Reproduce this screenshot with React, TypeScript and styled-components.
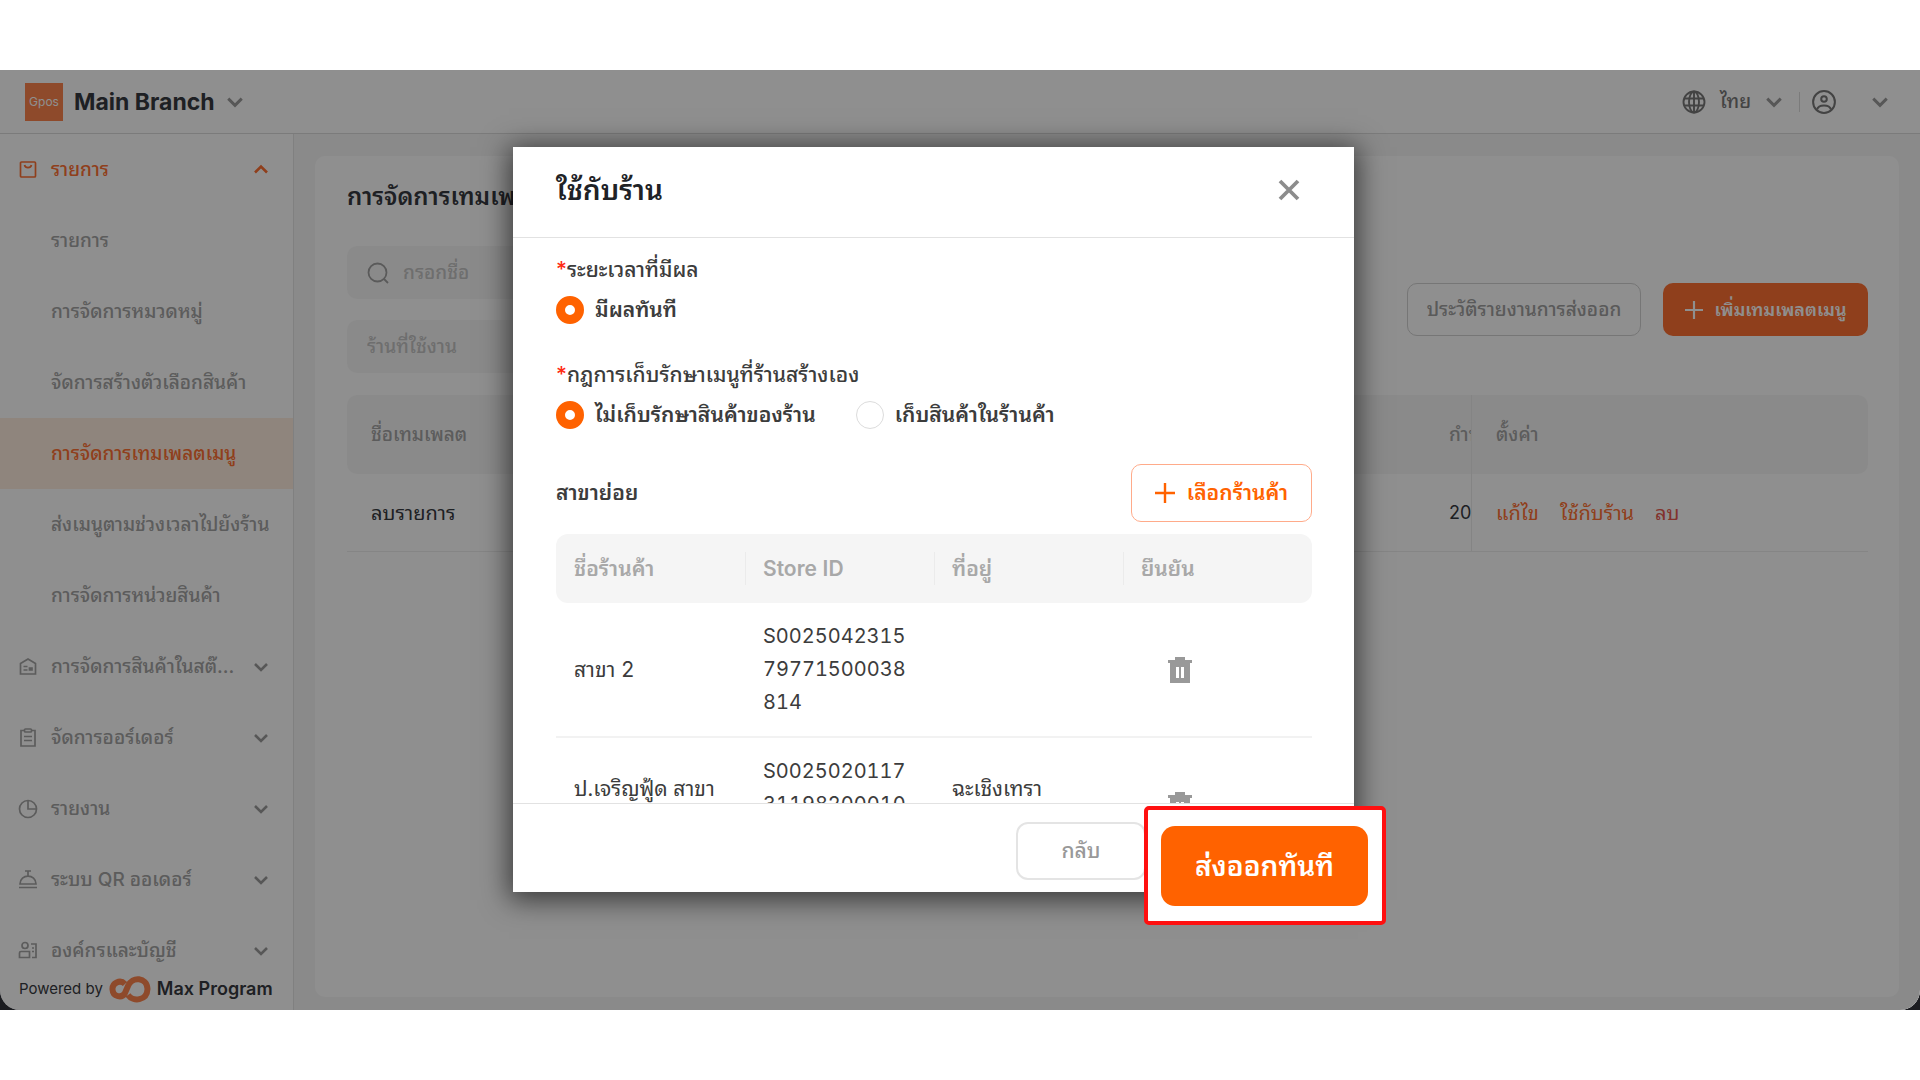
import React from "react";
import styled, { createGlobalStyle, css } from "styled-components";

const Global = createGlobalStyle`
  * { box-sizing: border-box; }
  body { margin: 0; background: #fff; }
  body, button, input, select {
    font-family: Inter, "Noto Sans Thai Looped", "Noto Sans", sans-serif;
    line-height: 24px;
  }
  button { cursor: pointer; }
`;

const Page = styled.div`
  min-height: 100vh;
  display: flex;
  flex-direction: column;
  padding: 70px 0;
`;

const Desktop = styled.div`
  flex: 1;
  display: flex;
  background: #1b1c20;
`;

const Window = styled.div`
  position: relative;
  flex: 1;
  height: calc(100vh - 140px);
  min-height: 900px;
  display: flex;
  flex-direction: column;
  overflow: hidden;
  background: #fff;
  border-radius: 0 0 20px 20px;
`;

const Header = styled.header`
  height: 64px;
  flex: none;
  display: flex;
  align-items: center;
  justify-content: space-between;
  padding: 0 31px 0 25px;
  border-bottom: 1px solid #dcdcdc;
  color: #373940;
`;

const Brand = styled.button`
  display: flex;
  align-items: center;
  gap: 11px;
  padding: 0;
  border: 0;
  background: none;
  color: #373940;
  font-size: 23px;
  font-weight: 700;
`;

const BrandBadge = styled.span`
  width: 38px;
  height: 38px;
  display: grid;
  place-items: center;
  background: #fe844d;
  color: #fff;
  font-size: 12px;
  font-weight: 400;
`;

const HeaderTools = styled.div`
  display: flex;
  align-items: center;
`;

const ToolButton = styled.button<{ $gap: number }>`
  display: flex;
  align-items: center;
  gap: ${(p) => p.$gap}px;
  padding: 0;
  border: 0;
  background: none;
  color: #787878;
  font-size: 19px;
  font-weight: 500;
`;

const ToolDivider = styled.span`
  width: 1px;
  height: 20px;
  margin: 0 12px 0 16px;
  background: #dcdcdc;
`;

const Main = styled.div`
  flex: 1;
  min-height: 0;
  display: flex;
`;

const Sidebar = styled.aside`
  width: 294px;
  flex: none;
  display: flex;
  flex-direction: column;
  border-right: 1px solid #e4e4e4;
`;

const Nav = styled.nav`
  flex: 1;
  min-height: 0;
  overflow: hidden;
`;

const NavItem = styled.a<{ $active?: boolean; $open?: boolean }>`
  height: 71px;
  display: grid;
  grid-template-columns: 20px 1fr 16px;
  align-items: center;
  column-gap: 13px;
  padding: 0 24px 0 18px;
  color: ${(p) => (p.$active || p.$open ? "#ff7032" : "#a4a4a4")};
  background: ${(p) => (p.$active ? "#ffeedf" : "none")};
  font-size: 19px;
  font-weight: 500;
  text-decoration: none;
  white-space: nowrap;
`;

const SideFooter = styled.div`
  height: 43px;
  flex: none;
  display: flex;
  align-items: center;
  gap: 6px;
  padding-left: 19px;
  color: #373940;
  font-size: 15px;

  b { font-size: 18px; font-weight: 600; }
`;

const Content = styled.main`
  flex: 1;
  min-width: 0;
  display: flex;
  padding: 22px 21px 13px;
  background: #f7f7f7;
`;

const Card = styled.section`
  flex: 1;
  min-width: 0;
  padding: 25px 31px 24px 32px;
  border-radius: 10px;
  background: #fff;
`;

const CardTitle = styled.h1`
  margin: 0;
  color: #373940;
  font-size: 24px;
  line-height: 32px;
  font-weight: 600;
`;

const FilterRow = styled.div`
  display: flex;
  align-items: center;
  justify-content: space-between;
  margin: 33px 0 22px;
`;

const Fields = styled.div`
  display: grid;
  gap: 21px;
  width: 320px;
`;

const Field = styled.label`
  height: 53px;
  display: flex;
  align-items: center;
  gap: 14px;
  padding: 0 20px;
  border-radius: 10px;
  background: #f7f7f7;
  color: #a0a0a0;

  input {
    flex: 1;
    min-width: 0;
    height: 40px;
    border: 0;
    outline: 0;
    padding: 0;
    background: none;
    font-size: 19px;
    line-height: 40px;
    font-weight: 500;
  }
  input::placeholder { color: #c4c4c4; opacity: 1; }
`;

const Actions = styled.div`
  display: flex;
  gap: 22px;
`;

const buttonBase = css`
  display: flex;
  align-items: center;
  justify-content: center;
  gap: 12px;
  padding: 0;
  border-radius: 10px;
  font-size: 19px;
  white-space: nowrap;
`;

const GhostButton = styled.button`
  ${buttonBase}
  width: 234px;
  height: 53px;
  border: 1px solid #d2d2d2;
  background: #fff;
  color: #a0a0a0;
  font-weight: 500;
`;

const AddButton = styled.button`
  ${buttonBase}
  width: 205px;
  height: 53px;
  border: 0;
  background: #ff7032;
  color: #fff;
  font-size: 18px;
  font-weight: 600;
`;

const TemplateTable = styled.table`
  width: 100%;
  table-layout: fixed;
  border-collapse: separate;
  border-spacing: 0;
  font-size: 20px;
  text-align: left;

  th, td { padding: 0; white-space: nowrap; overflow: hidden; }
  th { height: 79px; background: #f7f7f7; color: #a4a4a4; font-size: 19px; font-weight: 500; }
  td { height: 78px; border-bottom: 1px solid #eee; color: #373940; }
  td:nth-child(2) { font-size: 18px; }
  th:first-child, td:first-child { padding-left: 24px; }
  th:first-child { border-radius: 10px 0 0 10px; }
  th:last-child { border-radius: 0 10px 10px 0; }
  th:last-child, td:last-child { padding-left: 24px; border-left: 1px solid #ececec; }
`;

const RowLinks = styled.div`
  display: flex;
  gap: 21px;
`;

const RowLink = styled.a<{ $danger?: boolean }>`
  color: ${(p) => (p.$danger ? "#e85a50" : "#ff7032")};
  font-weight: 400;
  text-decoration: none;
`;

const Overlay = styled.div`
  position: absolute;
  inset: 0;
  display: flex;
  align-items: flex-start;
  justify-content: center;
  padding: 77px 53px 0 0;
  background: rgba(0, 0, 0, 0.44);
`;

const Dialog = styled.div`
  position: relative;
  width: 841px;
  height: 745px;
  display: flex;
  flex-direction: column;
  background: #fff;
  color: #3c3c3c;
  box-shadow: 0 4px 26px 4px rgba(0, 0, 0, 0.6);
`;

const DialogHead = styled.div`
  height: 91px;
  flex: none;
  display: flex;
  align-items: center;
  justify-content: space-between;
  padding: 0 51px 4px 43px;
  border-bottom: 1px solid #e2e2e2;

  h2 { margin: 0; color: #202226; font-size: 28px; line-height: 36px; font-weight: 600; }
`;

const IconButton = styled.button`
  display: grid;
  place-items: center;
  padding: 0;
  border: 0;
  background: none;
  color: #8c8c8c;
`;

const DialogBody = styled.div`
  flex: 1;
  min-height: 0;
  overflow: hidden;
  padding: 16px 42px 0 43px;
`;

const Choices = styled.fieldset`
  margin: 0 0 35px;
  padding: 0;
  border: 0;
`;

const ChoicesTitle = styled.legend`
  padding: 0;
  font-size: 21px;
  line-height: 32px;
  font-weight: 500;

  span { color: #ff2a12; }
`;

const ChoiceRow = styled.div`
  display: flex;
  gap: 40px;
  padding-top: 10px;
`;

const Choice = styled.label`
  height: 28px;
  display: flex;
  align-items: center;
  gap: 11px;
  font-size: 21px;
  font-weight: 600;

  input {
    appearance: none;
    width: 28px;
    height: 28px;
    margin: 0;
    border: 1px solid #dcdcdc;
    border-radius: 50%;
    background: #fff;
  }
  input:checked { border: 9px solid #ff6200; }
`;

const BranchBar = styled.div`
  display: flex;
  align-items: center;
  justify-content: space-between;
  margin-bottom: 12px;
  font-size: 21px;
  font-weight: 600;
`;

const PickButton = styled.button`
  ${buttonBase}
  width: 181px;
  height: 58px;
  border: 1px solid #ffab8a;
  background: #fff;
  color: #ff6200;
  font-size: 21px;
  font-weight: 600;
`;

const StoreTable = styled.table`
  width: 100%;
  table-layout: fixed;
  border-collapse: separate;
  border-spacing: 0;
  font-size: 21px;
  line-height: 33px;
  text-align: left;
  font-variant-numeric: tabular-nums;

  th { padding: 18px 0; background: #f5f5f5; color: #a8a8a8; font-weight: 600; }
  th span { display: block; padding-left: 18px; }
  th + th span { padding-left: 17px; border-left: 1px solid #ebebeb; }
  th:first-child { border-radius: 12px 0 0 12px; }
  th:last-child { border-radius: 0 12px 12px 0; }
  td { padding: 17px 18px; border-bottom: 2px solid #f2f2f2; white-space: pre; }
  td:nth-child(2) { font-size: 20px; }
`;

const TrashCell = styled.div`
  display: flex;
  padding-left: 26px;
`;

const DialogFoot = styled.div`
  height: 89px;
  flex: none;
  display: flex;
  justify-content: flex-end;
  padding: 18px 208px 0 0;
  border-top: 1px solid #e2e2e2;
`;

const BackButton = styled.button`
  ${buttonBase}
  width: 130px;
  height: 58px;
  border: 2px solid #e4e4e4;
  border-radius: 12px;
  background: #fff;
  color: #999;
  font-size: 21px;
  font-weight: 500;
`;

const Callout = styled.div`
  position: absolute;
  right: -32px;
  bottom: -33px;
  padding: 16px 14px 15px 13px;
  border: 4px solid #ff1010;
  border-radius: 5px;
  background: #fff;
`;

const ExportButton = styled.button`
  ${buttonBase}
  width: 207px;
  height: 80px;
  border: 0;
  border-radius: 14px;
  background: #ff6200;
  color: #fff;
  font-size: 28px;
  font-weight: 600;
`;

const ChevronIcon = styled.svg`
  color: #9c9c9c;
`;

const Chevron = ({ up, size = 16 }: { up?: boolean; size?: number }) => {
  const Shape = up ? "svg" : ChevronIcon;
  return (
    <Shape width={size} height={size} viewBox="0 0 16 16" fill="none" stroke="currentColor" strokeWidth="2.6">
      <path d={up ? "M2 10.500 8 4.500 14 10.500" : "M2 5 8 11 14 5"} />
    </Shape>
  );
};

const Plus = ({ size }: { size: number }) => (
  <svg width={size} height={size} viewBox="0 0 20 20" fill="none" stroke="currentColor" strokeWidth="2.4">
    <path d="M10 0V20M0 10H20" />
  </svg>
);

const Trash = () => (
  <svg width="26" height="28" viewBox="0 0 26 28" fill="#999">
    <path fillRule="evenodd" d="M8 1H18V4H25V7H23V27H3V7H1V4H8ZM9 11V22H12V11ZM14 11V22H17V11Z" />
  </svg>
);

const icons: Record<string, React.ReactNode> = {
  bag: <><rect x="2.500" y="2" width="15" height="15" rx="1" /><path d="M6.500 5C7.500 8.500 12.500 8.500 13.500 5" /></>,
  store: <><path d="M2.500 17V6.500L10 2 17.500 6.500V17Z" /><path d="M5.500 9.500H9.500M5.500 13H9.500" /><path d="M11.500 11H14V13H11.500Z" fill="currentColor" /></>,
  order: <><path d="M6.500 2.500H3V18H17V2.500H13.500" /><rect x="6.500" y="1" width="7" height="3" rx="1" /><path d="M6 8.500H14M6 12.500H14" /></>,
  report: <><circle cx="10" cy="10" r="8.500" /><path d="M10 1.500V10H18.500" /></>,
  bell: <><path d="M2 14C2 3.500 18 3.500 18 14Z M1 17.500H19 M10 6V1.500 M7 1H13" /></>,
  org: <><circle cx="7" cy="4.500" r="3" /><path d="M1.500 16.500V12Q1.500 10.500 3 10.500H11.500V16.500Z M13 3H18V16.500H14 M14 7H16M14 10.500H16" /></>,
};

const NavIcon = ({ name }: { name: string }) => (
  <svg width="20" height="20" viewBox="0 0 20 20" fill="none" stroke="currentColor" strokeWidth="1.7">
    {icons[name]}
  </svg>
);

const navItems: { label: string; icon?: string; open?: boolean; active?: boolean }[] = [
  { label: "รายการ", icon: "bag", open: true },
  { label: "รายการ" },
  { label: "การจัดการหมวดหมู่" },
  { label: "จัดการสร้างตัวเลือกสินค้า" },
  { label: "การจัดการเทมเพลตเมนู", active: true },
  { label: "ส่งเมนูตามช่วงเวลาไปยังร้าน" },
  { label: "การจัดการหน่วยสินค้า" },
  { label: "การจัดการสินค้าในสต๊...", icon: "store" },
  { label: "จัดการออร์เดอร์", icon: "order" },
  { label: "รายงาน", icon: "report" },
  { label: "ระบบ QR ออเดอร์", icon: "bell" },
  { label: "องค์กรและบัญชี", icon: "org" },
];

const stores = [
  { name: "สาขา 2", id: "S0025042315\n79771500038\n814", address: "" },
  { name: "ป.เจริญฟู้ด สาขา\n\u00a0", id: "S0025020117\n31198200010\n\u00a0", address: "ฉะเชิงเทรา\n\u00a0" },
];

export default function App() {
  return (
    <Page>
      <Global />
      <Desktop>
        <Window>
          <Header>
            <Brand>
              <BrandBadge>Gpos</BrandBadge>
              Main Branch
              <Chevron size={18} />
            </Brand>
            <HeaderTools>
              <ToolButton $gap={14}>
                <svg width="24" height="24" viewBox="0 0 24 24" fill="none" stroke="currentColor" strokeWidth="1.9">
                  <circle cx="12" cy="12" r="10.500" />
                  <ellipse cx="12" cy="12" rx="5" ry="10.500" />
                  <path d="M12 2V22M3 8.500H21M3 15.500H21" />
                </svg>
                ไทย
                <Chevron size={18} />
              </ToolButton>
              <ToolDivider />
              <ToolButton $gap={35} aria-label="บัญชี">
                <svg width="24" height="24" viewBox="0 0 24 24" fill="none" stroke="currentColor" strokeWidth="2">
                  <circle cx="12" cy="12" r="10.900" />
                  <circle cx="12" cy="9" r="2.800" />
                  <path d="M5 19.500C6.500 14 17.500 14 19 19.500" />
                </svg>
                <Chevron size={18} />
              </ToolButton>
            </HeaderTools>
          </Header>
          <Main>
            <Sidebar>
              <Nav>
                {navItems.map((item, i) => (
                  <NavItem key={i} href="#" $active={item.active} $open={item.open}>
                    {item.icon ? <NavIcon name={item.icon} /> : <span />}
                    <span>{item.label}</span>
                    {item.icon && <Chevron up={item.open} />}
                  </NavItem>
                ))}
              </Nav>
              <SideFooter>
                Powered by
                <svg width="42" height="28" viewBox="0 0 42 28" fill="none" stroke="#fe844d" strokeWidth="6">
                  <path d="M16 9C11 4 3 8 3.500 14.500C4 22 13 23.500 16 18L19 11C23 1 38 2 38.500 14C38 26 24 27 19 20" />
                </svg>
                <b>Max Program</b>
              </SideFooter>
            </Sidebar>
            <Content>
              <Card>
                <CardTitle>การจัดการเทมเพลตเมนู</CardTitle>
                <FilterRow>
                  <Fields>
                    <Field>
                      <svg width="22" height="22" viewBox="0 0 22 22" fill="none" stroke="currentColor" strokeWidth="1.8">
                        <circle cx="10.500" cy="10.500" r="9" />
                        <path d="M17 17 21 21" />
                      </svg>
                      <input placeholder="กรอกชื่อ" />
                    </Field>
                    <Field>
                      <input placeholder="ร้านที่ใช้งาน" />
                    </Field>
                  </Fields>
                  <Actions>
                    <GhostButton>ประวัติรายงานการส่งออก</GhostButton>
                    <AddButton>
                      <Plus size={18} />
                      เพิ่มเทมเพลตเมนู
                    </AddButton>
                  </Actions>
                </FilterRow>
                <TemplateTable>
                  <colgroup>
                    <col />
                    <col width="22" />
                    <col width="397" />
                  </colgroup>
                  <thead>
                    <tr>
                      <th>ชื่อเทมเพลต</th>
                      <th>กำห</th>
                      <th>ตั้งค่า</th>
                    </tr>
                  </thead>
                  <tbody>
                    <tr>
                      <td>ลบรายการ</td>
                      <td>20</td>
                      <td>
                        <RowLinks>
                          <RowLink href="#">แก้ไข</RowLink>
                          <RowLink href="#">ใช้กับร้าน</RowLink>
                          <RowLink href="#" $danger>ลบ</RowLink>
                        </RowLinks>
                      </td>
                    </tr>
                  </tbody>
                </TemplateTable>
              </Card>
            </Content>
          </Main>
          <Overlay>
            <Dialog role="dialog" aria-labelledby="dialog-title">
              <DialogHead>
                <h2 id="dialog-title">ใช้กับร้าน</h2>
                <IconButton aria-label="ปิด">
                  <svg width="28" height="28" viewBox="0 0 28 28" fill="none" stroke="currentColor" strokeWidth="3.800">
                    <path d="M5 5 23 23M23 5 5 23" />
                  </svg>
                </IconButton>
              </DialogHead>
              <DialogBody>
                <Choices>
                  <ChoicesTitle><span>*</span>ระยะเวลาที่มีผล</ChoicesTitle>
                  <ChoiceRow>
                    <Choice><input type="radio" name="period" defaultChecked />มีผลทันที</Choice>
                  </ChoiceRow>
                </Choices>
                <Choices>
                  <ChoicesTitle><span>*</span>กฎการเก็บรักษาเมนูที่ร้านสร้างเอง</ChoicesTitle>
                  <ChoiceRow>
                    <Choice><input type="radio" name="rule" defaultChecked />ไม่เก็บรักษาสินค้าของร้าน</Choice>
                    <Choice><input type="radio" name="rule" />เก็บสินค้าในร้านค้า</Choice>
                  </ChoiceRow>
                </Choices>
                <BranchBar>
                  สาขาย่อย
                  <PickButton>
                    <Plus size={20} />
                    เลือกร้านค้า
                  </PickButton>
                </BranchBar>
                <StoreTable>
                  <thead>
                    <tr>
                      <th><span>ชื่อร้านค้า</span></th>
                      <th><span>Store ID</span></th>
                      <th><span>ที่อยู่</span></th>
                      <th><span>ยืนยัน</span></th>
                    </tr>
                  </thead>
                  <tbody>
                    {stores.map((store) => (
                      <tr key={store.id}>
                        <td>{store.name}</td>
                        <td>{store.id}</td>
                        <td>{store.address}</td>
                        <td>
                          <TrashCell>
                            <IconButton aria-label="ลบ"><Trash /></IconButton>
                          </TrashCell>
                        </td>
                      </tr>
                    ))}
                  </tbody>
                </StoreTable>
              </DialogBody>
              <DialogFoot>
                <BackButton>กลับ</BackButton>
              </DialogFoot>
              <Callout>
                <ExportButton>ส่งออกทันที</ExportButton>
              </Callout>
            </Dialog>
          </Overlay>
        </Window>
      </Desktop>
    </Page>
  );
}
